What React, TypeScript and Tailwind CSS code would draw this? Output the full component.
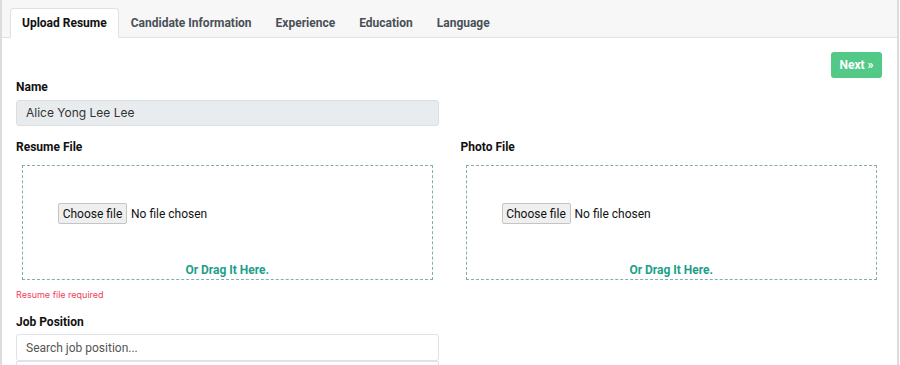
import React from "react";

const font = { fontFamily: "Inter, 'Liberation Sans', sans-serif" };
const rob = { fontFamily: "Roboto, 'Liberation Sans', sans-serif" };

function DropBox() {
  return (
    <div className="mx-[6px] h-[115px] border border-dashed border-[#80afaf] flex flex-col">
      <div className="pt-[37px] pl-[35px] flex items-center text-[12px] text-[#111]" style={rob}>
        <span className="h-[21px] w-[69px] justify-center flex items-center bg-[#efefef] border border-[#c4c4c4] rounded-[2px]">Choose file</span>
        <span className="ml-[4px]">No file chosen</span>
      </div>
      <div className="mt-auto mb-[1px] text-center text-[12px] font-bold text-[#1c9f8a] leading-[16px]" style={rob}>Or Drag It Here.</div>
    </div>
  );
}

export default function App() {
  const tabs = ["Upload Resume", "Candidate Information", "Experience", "Education", "Language"];
  return (
    <div className="w-[900px] h-[365px] overflow-hidden bg-white" style={font}>
      <div className="h-full mr-[1px] border-l-[2px] border-r-[2px] border-[#dcdcdc] flex flex-col">
        <div className="shrink-0 h-[38px] bg-[#f7f7f7] border-b border-[#dee2e6] flex items-end pl-[8px]" style={rob}>
          {tabs.map((t, i) => (
            <div
              key={t}
              className={
                i === 0
                  ? "h-[30px] -mb-[1px] px-[11px] flex items-center bg-white border border-[#dee2e6] border-b-white rounded-t-[4px] text-[12px] font-bold text-[#111]"
                  : "h-[30px] -mb-[1px] px-[11px] flex items-center border border-transparent text-[12px] font-bold text-[#495057]"
              }
            >
              {t}
            </div>
          ))}
        </div>
        <div className="px-[14px] pt-[14px]">
          <div className="flex justify-end pr-[1px]">
            <button className="h-[26px] w-[51px] rounded-[3px] bg-[#52c987] text-white text-[12px] font-bold" style={rob}>Next »</button>
          </div>
          <div className="grid grid-cols-2 gap-x-[22px]">
            <div>
              <div className="mt-[1px] text-[12px] font-bold text-[#111] leading-[16px]" style={rob}>Name</div>
              <div className="mt-[5px] h-[26px] bg-[#e9ecef] border border-[#dadfe4] rounded-[3px] flex items-center pl-[9px] text-[12px] text-[#333]">Alice Yong Lee Lee</div>
            </div>
            <div />
            <div>
              <div className="mt-[13px] text-[12px] font-bold text-[#111] leading-[16px]" style={rob}>Resume File</div>
              <div className="mt-[10px]"><DropBox /></div>
              <div className="mt-[9px] text-[9px] text-[#f0405a] leading-[12px]">Resume file required</div>
              <div className="mt-[13px] text-[12px] font-bold text-[#111] leading-[16px]" style={rob}>Job Position</div>
              <div className="mt-[4px] h-[27px] bg-white border border-[#dfe3e8] rounded-[3px] flex items-center pl-[9px] text-[12px] text-[#555]" style={rob}>Search job position...</div>
              <div className="h-[10px] border border-[#dfe3e8]" />
            </div>
            <div>
              <div className="mt-[13px] text-[12px] font-bold text-[#111] leading-[16px]" style={rob}>Photo File</div>
              <div className="mt-[10px] -ml-[1px]"><DropBox /></div>
            </div>
          </div>
        </div>
      </div>
    </div>
  );
}
